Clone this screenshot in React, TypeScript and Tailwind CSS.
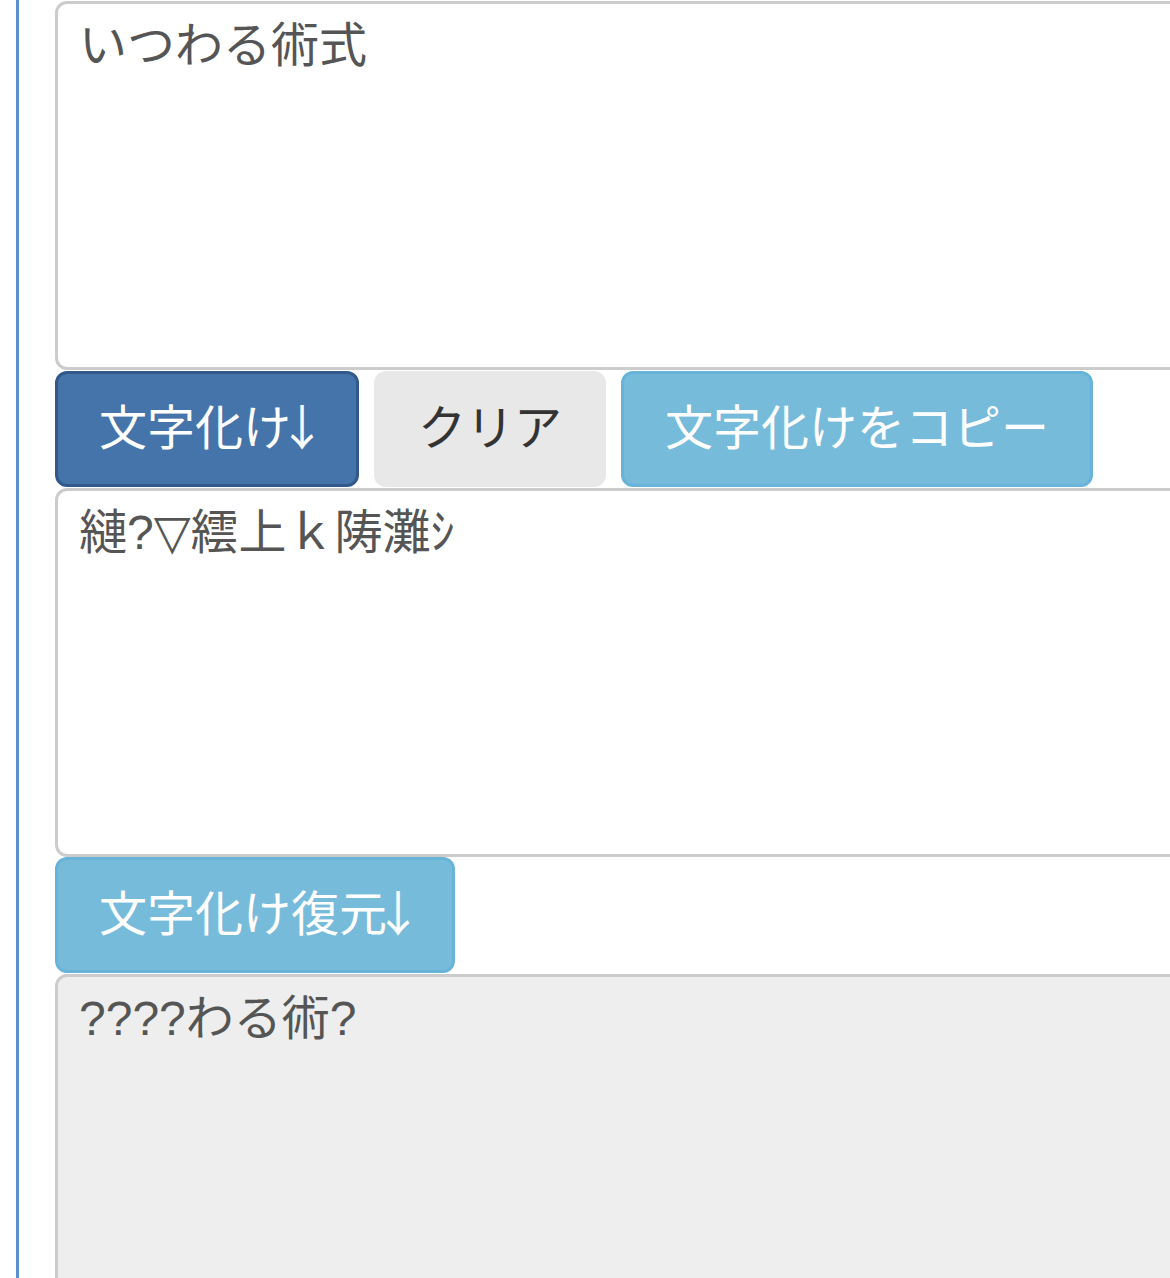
import React from "react";

const font = { fontFamily: '"Liberation Sans", "DejaVu Sans", "Noto Sans CJK JP", sans-serif' };
const cjk = { fontFamily: '"Noto Sans CJK JP", sans-serif' };

function Area({ value, readOnly }: { value: string; readOnly?: boolean }) {
  return (
    <textarea
      readOnly={readOnly}
      defaultValue={value}
      className={
        "block w-full h-[369px] resize-none rounded-[12px] border-[3px] border-[#cccccc] px-[21px] py-[8px] text-[48px] leading-[68px] text-[#555555] outline-none " +
        (readOnly ? "bg-[#eeeeee]" : "bg-white")
      }
      style={font}
    />
  );
}

function Arrow() {
  return (
    <span className="-ml-[13px] -mr-[11px] inline-block align-baseline leading-none" style={cjk}>
      ↓
    </span>
  );
}

export default function App() {
  return (
    <div className="h-[1278px] w-[1170px] overflow-hidden bg-white pl-[16px]" style={font}>
      <div className="h-full w-[1240px] border-l-[3px] border-[#5b8fcf] pl-[36px] pt-px">
        <Area value="いつわる術式" />
        <div className="mt-[1px] flex items-start gap-[15px]">
          <button className="h-[116px] rounded-[12px] border-[3px] border-[#32598a] bg-[#4474aa] px-[41px] py-[20px] text-[48px] leading-[70px] text-white">
            文字化け<Arrow />
          </button>
          <button className="h-[116px] rounded-[12px] border-[3px] border-[#e8e8e8] bg-[#e8e8e8] px-[41px] py-[20px] text-[48px] leading-[70px] text-[#333333]">
            クリア
          </button>
          <button className="h-[116px] rounded-[12px] border-[3px] border-[#68b3d8] bg-[#77bbdb] px-[41px] py-[20px] text-[48px] leading-[70px] text-white">
            文字化けをコピー
          </button>
        </div>
        <div className="mt-[1px]">
          <Area value="縺?▽繧上ｋ陦灘ｼ" />
        </div>
        <div className="flex">
          <button className="h-[116px] rounded-[12px] border-[3px] border-[#68b3d8] bg-[#77bbdb] px-[41px] py-[20px] text-[48px] leading-[70px] text-white">
            文字化け復元<Arrow />
          </button>
        </div>
        <div className="mt-[1px]">
          <Area value="????わる術?" readOnly />
        </div>
      </div>
    </div>
  );
}
